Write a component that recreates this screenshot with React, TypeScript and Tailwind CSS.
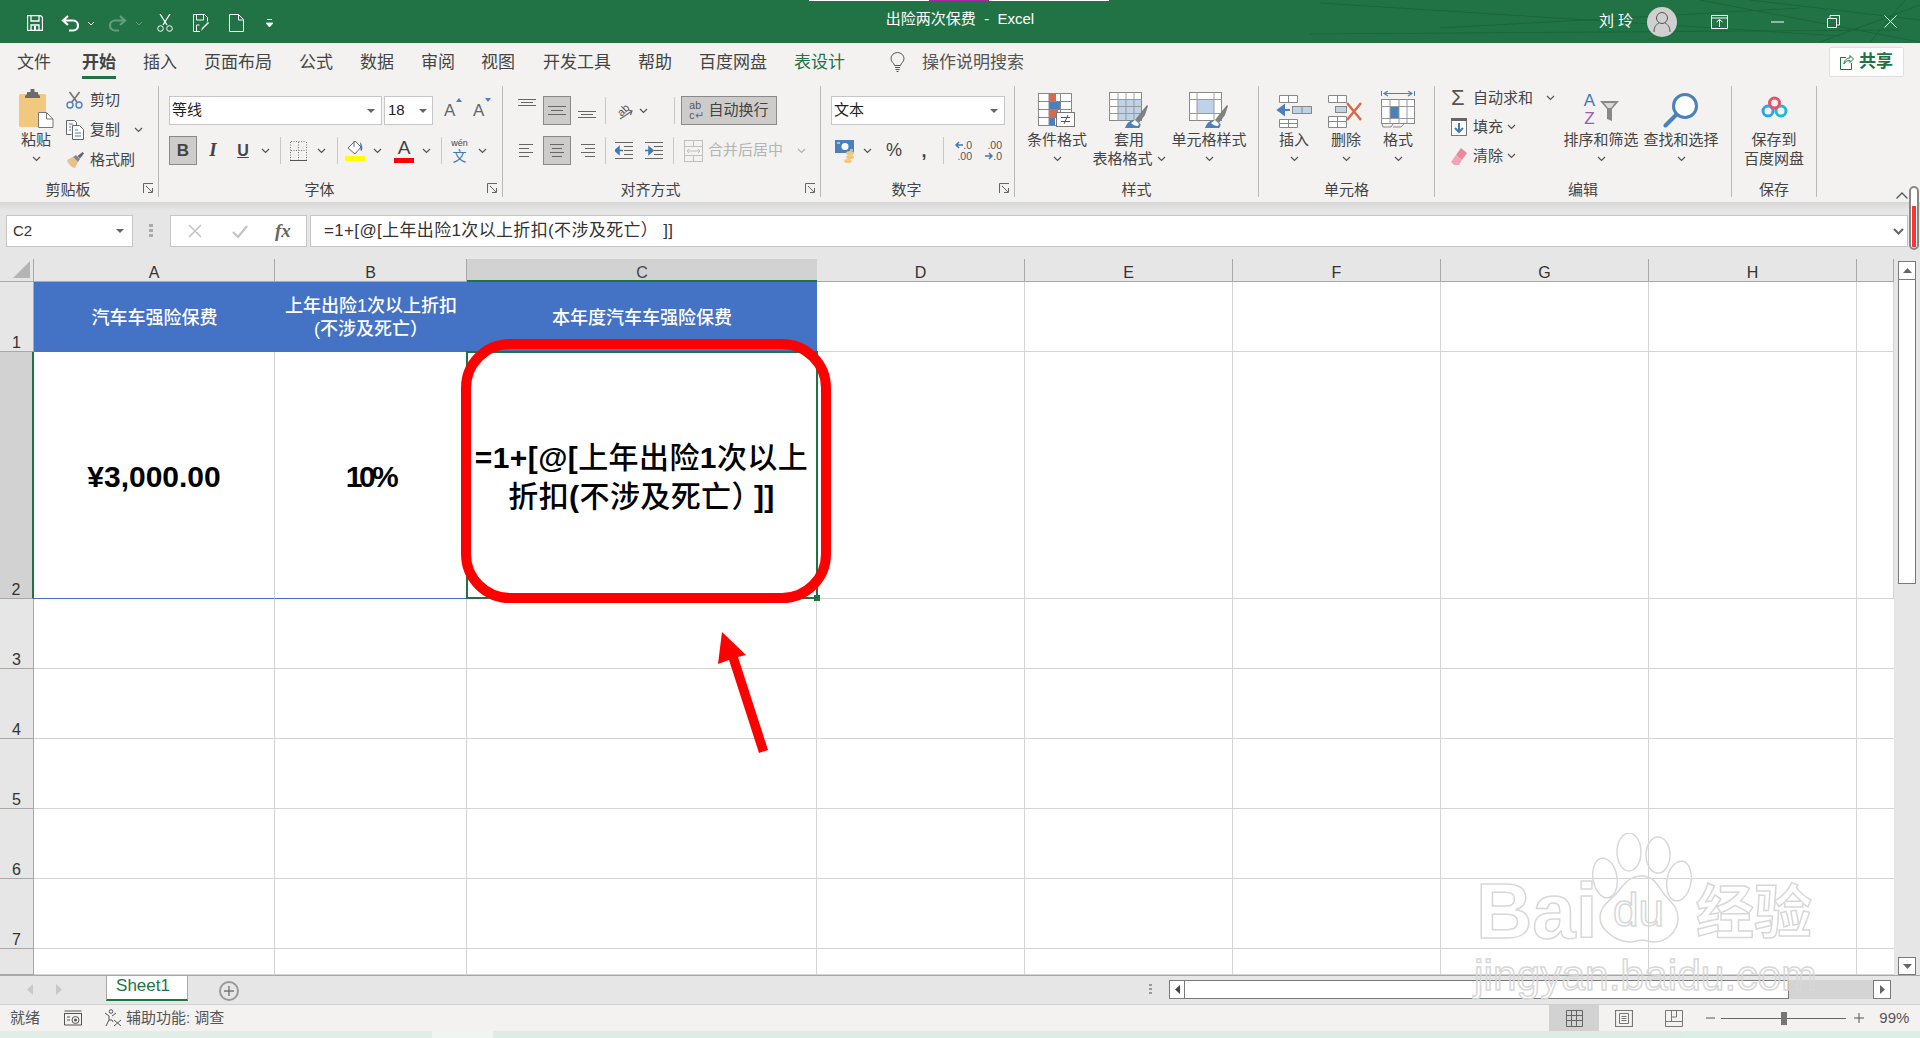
import React from "react";

const Chev = ({ className = "" }: { className?: string }) => (
  <svg width="9" height="6" viewBox="0 0 9 6" className={"shrink-0 " + className}>
    <path d="M1 1l3.5 3.5L8 1" fill="none" stroke="#555" strokeWidth="1.2" />
  </svg>
);

const Tri = ({ className = "" }: { className?: string }) => (
  <svg width="8" height="4" viewBox="0 0 8 4" className={"shrink-0 " + className}>
    <path d="M0 0h8L4 4z" fill="#666" />
  </svg>
);

const Launcher = () => (
  <svg width="11" height="11" viewBox="0 0 11 11">
    <path d="M.5 10V.5H10M3 3l6 6M5 9.5h4.5V5" fill="none" stroke="#666" />
  </svg>
);

const Sep = ({ className = "" }: { className?: string }) => (
  <div className={"h-[27px] w-px shrink-0 bg-[#c8c8c8] " + className} />
);

// lines for the alignment buttons, given as [x1, x2, y]
const Lines = ({ rows, className = "" }: { rows: number[][]; className?: string }) => (
  <svg width="18" height="20" viewBox="0 0 18 20" className={"shrink-0 " + className}>
    {rows.map((r, i) => (
      <path key={i} d={`M${r[0]} ${r[2]}.5H${r[1]}`} stroke="#666" />
    ))}
  </svg>
);

const topLines = [[0, 18, 3], [3, 15, 6], [0, 18, 9]];
const midLines = [[0, 18, 5], [3, 15, 9], [0, 18, 13]];
const botLines = [[0, 18, 10], [3, 15, 13], [0, 18, 16]];
const leftLines = [[1, 15, 3], [1, 11, 7], [1, 15, 11], [1, 11, 15]];
const centerLines = [[2, 16, 3], [4, 14, 7], [2, 16, 11], [4, 14, 15]];
const rightLines = [[3, 17, 3], [7, 17, 7], [3, 17, 11], [7, 17, 15]];

const GrayBtn = ({ children, className = "" }: { children: React.ReactNode; className?: string }) => (
  <div className={"flex h-[29px] shrink-0 items-center justify-center border border-[#8a8a8a] bg-[#cdcccb] " + className}>
    {children}
  </div>
);

function Group({
  title,
  className,
  launcher,
  children,
}: {
  title: string;
  className: string;
  launcher?: boolean;
  children: React.ReactNode;
}) {
  return (
    <div className={"flex h-[111px] shrink-0 flex-col border-r border-[#b9b9b9] " + className}>
      <div className="h-[94px] flex-none">{children}</div>
      <div className="flex h-[17px] items-center">
        <div className="flex-1 pt-[2px] text-center text-[15px] leading-[17px]">{title}</div>
        {launcher && (
          <div className="flex w-[22px] justify-end pr-[4px]">
            <Launcher />
          </div>
        )}
      </div>
    </div>
  );
}

function BigBtn({
  icon,
  lines,
  className = "",
  inlineChev,
}: {
  icon: React.ReactNode;
  lines: string[];
  className?: string;
  inlineChev?: boolean;
}) {
  return (
    <div className={"flex shrink-0 flex-col items-center " + className}>
      <div className="flex h-[44px] items-end pb-[2px]">{icon}</div>
      {lines.map((l, i) => (
        <div key={i} className="flex h-[19px] items-center whitespace-nowrap text-[15px] leading-[19px]">
          {l}
          {inlineChev && i === lines.length - 1 && <Chev className="ml-[4px]" />}
        </div>
      ))}
      {lines.length === 1 && (
        <div className="flex h-[19px] items-center">
          <Chev />
        </div>
      )}
    </div>
  );
}

const PasteIcon = () => (
  <svg width="36" height="39" viewBox="0 0 36 39">
    <rect x="1" y="5" width="27" height="33" rx="1.5" fill="#f0c97e" />
    <path d="M9 5V3h3.5V0h4v3H20v2l2 2v2H7V7z" fill="#6b6b6b" />
    <path d="M20.5 23.5h8l6.5 6.5v8.5H20.500z" fill="#fff" stroke="#777" />
    <path d="M28.500 23.500V30H35" fill="none" stroke="#777" />
  </svg>
);

const SmallCut = () => (
  <svg width="17" height="18" viewBox="0 0 17 18">
    <path d="M6 11L13.500 1M11 11L3.500 1" stroke="#777" strokeWidth="1.7" fill="none" />
    <circle cx="4" cy="14" r="3" fill="none" stroke="#4a81bd" strokeWidth="1.4" />
    <circle cx="13" cy="14" r="3" fill="none" stroke="#4a81bd" strokeWidth="1.4" />
  </svg>
);

const SmallCopy = () => (
  <svg width="18" height="20" viewBox="0 0 18 20">
    <path d="M.5.5h8l2 2v3M.5.5v14h5" fill="#fff" stroke="#666" />
    <path d="M6.500 5.500h7l4 4v10h-11z" fill="#fff" stroke="#666" />
    <path d="M3 4h4M3 7h2M3 10h2M9 10h3M9 13h6M9 16h6" stroke="#4a81bd" />
  </svg>
);

const SmallBrush = () => (
  <svg width="18" height="17" viewBox="0 0 18 17">
    <path d="M1 8l6-3 5 5-3 6c-3 0-7-4-8-8z" fill="#e7c08a" />
    <path d="M7 5l3-2 4 4-2 3z" fill="#888" />
    <path d="M11.500 4l5-4 1.500 1.500-4 5z" fill="#666" />
  </svg>
);

const BorderIcon = () => (
  <svg width="17" height="20" viewBox="0 0 17 20">
    <path d="M.5 1v18M8.500 1v18M16.500 1v18M1 .5h15M1 9.500h15" stroke="#777" strokeDasharray="1 1.500" fill="none" />
    <path d="M0 19.500h17" stroke="#555" />
  </svg>
);

const FillIcon = () => (
  <div className="flex w-[20px] shrink-0 flex-col items-center">
    <svg width="18" height="15" viewBox="0 0 18 15">
      <path d="M9 1l6 6-6 7-7-6z" fill="#fff" stroke="#666" />
      <path d="M8 1v6" stroke="#666" />
      <path d="M14 2c2 2 3 6 2 8s-2 0-1.500-3z" fill="#3f78b5" />
    </svg>
    <div className="mt-px h-[5px] w-[20px] bg-[#ffff00]" />
  </div>
);

const OrientIcon = () => (
  <svg width="20" height="20" viewBox="0 0 20 20">
    <text x="3" y="13" transform="rotate(-45 9 9)" fontSize="11" fill="#555" fontFamily="Liberation Sans">ab</text>
    <path d="M6 18L18 10M14 9l4 1-1.500 4" stroke="#666" fill="none" strokeWidth="1.200" />
  </svg>
);

const IndentIcon = ({ flip }: { flip?: boolean }) => (
  <svg width="18" height="20" viewBox="0 0 18 20" className="shrink-0">
    <path d="M0 1.500h18M9 5.500h9M9 9.500h9M9 13.500h9M0 17.500h18" stroke="#666" />
    <path
      d={flip ? "M0 9.500h6M4 6l4 3.500L4 13z" : "M8 9.500H2M4 6L0 9.500 4 13z"}
      stroke="#3f78b5"
      strokeWidth="1.500"
      fill="#3f78b5"
    />
  </svg>
);

const MergeIcon = () => (
  <svg width="19" height="22" viewBox="0 0 19 22">
    <rect x=".5" y=".5" width="18" height="21" fill="none" stroke="#c0c0c0" />
    <path d="M0 6.500h19M0 15.500h19M9.500 0v6M9.500 16v6" stroke="#c0c0c0" />
    <path d="M3 11h13M5 9l-2 2 2 2M14 9l2 2-2 2" stroke="#c0c0c0" fill="none" />
  </svg>
);

const MoneyIcon = () => (
  <svg width="20" height="24" viewBox="0 0 20 24">
    <rect x="0" y="1" width="19" height="13" fill="#4a81bd" />
    <circle cx="10" cy="7.500" r="3.500" fill="#fff" />
    <path d="M2 4h3M15 11h3" stroke="#fff" />
    <ellipse cx="15" cy="14" rx="4" ry="2" fill="#f0c97e" />
    <ellipse cx="15" cy="18" rx="4" ry="2" fill="#f0c97e" />
    <ellipse cx="13" cy="22" rx="4" ry="2" fill="#f0c97e" />
  </svg>
);

const DecIcon = ({ more }: { more?: boolean }) => (
  <div className="relative flex h-[24px] w-[18px] shrink-0 flex-col items-end justify-center text-[10.500px] leading-[11px] text-[#555]">
    <div className="flex items-center">
      {more && (
        <svg width="8" height="8" viewBox="0 0 8 8">
          <path d="M8 4H2M4 1L1 4l3 3" stroke="#3f78b5" strokeWidth="1.500" fill="none" />
        </svg>
      )}
      {more ? ".0" : ".00"}
    </div>
    <div className="flex items-center">
      {!more && (
        <svg width="8" height="8" viewBox="0 0 8 8">
          <path d="M0 4h6M4 1l3 3-3 3" stroke="#3f78b5" strokeWidth="1.500" fill="none" />
        </svg>
      )}
      {more ? ".00" : ".0"}
    </div>
  </div>
);

const CondIcon = () => (
  <svg width="38" height="35" viewBox="0 0 38 35">
    <rect x=".5" y=".5" width="33" height="32" fill="#fff" stroke="#888" />
    <rect x="11" y="1" width="7" height="7" fill="#d9694a" />
    <rect x="11" y="9" width="11" height="7" fill="#4a81bd" />
    <rect x="11" y="17" width="9" height="7" fill="#d9694a" />
    <rect x="11" y="25" width="6" height="7" fill="#4a81bd" />
    <path d="M11 0v33M22.500 0v33M0 8.500h34M0 16.500h34M0 24.500h34" stroke="#888" fill="none" />
    <rect x="18.500" y="19.500" width="18" height="14" fill="#fff" stroke="#777" />
    <path d="M23 24.500h9M23 28.500h9M30 22l-4 9" stroke="#555" />
  </svg>
);

const Brush = () => (
  <g>
    <path d="M26 28l7-9 5-6 1 1-3 9-6 8z" fill="#808080" />
    <path d="M26 28c-4 0-8 2-10 8h14c2-2 2-5 0-5z" fill="#4a81bd" />
    <path d="M22 31l4-3 4 4-1 2c-3 0-5-1-7-3z" fill="#fff" />
  </g>
);

const TableFmtIcon = () => (
  <svg width="40" height="36" viewBox="0 0 40 36">
    <rect x=".5" y=".5" width="32" height="28" fill="#fff" stroke="#888" />
    <rect x="9" y="7" width="23" height="21" fill="#bed2e8" />
    <path d="M9 0v29M17 0v29M25 0v29M0 7.500h33M0 14.500h33M0 21.500h33" stroke="#999" />
    <Brush />
  </svg>
);

const CellStyleIcon = () => (
  <svg width="40" height="39" viewBox="0 0 40 39">
    <g transform="translate(0 3)">
      <rect x=".5" y=".5" width="32" height="28" fill="#fff" stroke="#888" />
      <rect x="8" y="7" width="17" height="15" fill="#bed2e8" />
      <path d="M8 0v29M25 0v29M0 7.500h33M0 21.500h33" stroke="#999" />
      <Brush />
    </g>
  </svg>
);

const InsertIcon = () => (
  <svg width="36" height="33" viewBox="0 0 36 33">
    <path d="M3.500.5h18v7h-18zM12.500 1v6M3.500 24.500h18v8h-18zM3.500 28.500h18M12.500 25v8" fill="#fff" stroke="#888" />
    <rect x="16.500" y="11.500" width="19" height="7" fill="#bed2e8" stroke="#888" />
    <path d="M26 12v6" stroke="#888" />
    <path d="M14 15H4M8 10.500L2 15l6 4.500z" stroke="#4a81bd" strokeWidth="2" fill="#4a81bd" />
  </svg>
);

const DeleteIcon = () => (
  <svg width="36" height="33" viewBox="0 0 36 33">
    <path d="M.5.500h18v7H.5zM9.500 1v6M.5 21.500h18v11H.5zM.5 26.500h18M9.500 22v10" fill="#fff" stroke="#888" />
    <rect x="7.500" y="11.500" width="11" height="6" fill="#bed2e8" stroke="#888" />
    <path d="M19 8l14 17M33 8L19 25" stroke="#d9694a" strokeWidth="2.500" />
  </svg>
);

const FormatIcon = () => (
  <svg width="34" height="37" viewBox="0 0 34 37">
    <path d="M.5 0v5M33.500 0v5M4 2.500h26" stroke="#4a81bd" />
    <path d="M7 0L3 2.500 7 5M27 0l4 2.500L27 5" fill="none" stroke="#4a81bd" strokeWidth="1.200" />
    <rect x=".5" y="8.500" width="33" height="24" fill="#fff" stroke="#888" />
    <rect x="9" y="16" width="9" height="11" fill="#4a81bd" />
    <path d="M9 8v25M18 8v25M26 8v25M0 15.500h33M0 27.500h33" stroke="#999" />
    <path d="M1 33l1 3h8l2-3M12 36h8l3-3" stroke="#888" fill="none" />
  </svg>
);

const FillDown = () => (
  <svg width="16" height="18" viewBox="0 0 16 18">
    <rect x=".5" y=".5" width="15" height="17" fill="#fff" stroke="#777" />
    <rect x="0" y="0" width="16" height="3" fill="#666" />
    <path d="M8 5v9M4 10l4 4 4-4" stroke="#3f78b5" strokeWidth="2" fill="none" />
  </svg>
);

const Eraser = () => (
  <svg width="17" height="19" viewBox="0 0 17 19">
    <path d="M10 1l6 5-5 7-6-5z" fill="#e88a9a" />
    <path d="M5 8l6 5-3 5H3l-3-3z" fill="#f0a5b2" />
  </svg>
);

const SortIcon = () => (
  <div className="flex h-[36px] w-[38px] items-start">
    <div className="w-[15px] text-center text-[17px] font-medium leading-[18px]">
      <div className="text-[#3f78b5]">A</div>
      <div className="text-[#8f63b5]">Z</div>
    </div>
    <svg width="19" height="22" viewBox="0 0 19 22" className="ml-[3px] mt-[9px]">
      <path d="M0 0h19l-7 8v12l-5-2V8z" fill="#888" />
      <path d="M4 2h11l-4 5H8z" fill="#d8d8d8" />
    </svg>
  </div>
);

const FindIcon = () => (
  <svg width="36" height="35" viewBox="0 0 36 35">
    <circle cx="22" cy="13" r="11.500" fill="#fff" stroke="#4a81bd" strokeWidth="3" />
    <path d="M13 22L2.500 32.500" stroke="#4a81bd" strokeWidth="4" strokeLinecap="round" />
  </svg>
);

const CloudIcon = () => (
  <svg width="27" height="22" viewBox="0 0 27 22" className="mb-[10px]">
    <circle cx="7" cy="15" r="5" fill="none" stroke="#2aa5e8" strokeWidth="3" />
    <circle cx="20" cy="15" r="5" fill="none" stroke="#22b8d8" strokeWidth="3" />
    <circle cx="13.500" cy="7" r="5" fill="none" stroke="#e8506e" strokeWidth="3" />
  </svg>
);

// grid figures
const colWidths = "grid-cols-[34px_241px_192px_350px_208px_208px_208px_208px_208px_37px]";
const cols = ["A", "B", "C", "D", "E", "F", "G", "H", ""];

function Sheet() {
  const cellBorder = "border-r border-b border-[#d4d4d4]";
  const bodyRows = [3, 4, 5, 6, 7, 8];
  return (
    <div className="relative flex-1 bg-white">
      <div
        className={
          "grid h-full grid-rows-[23px_70px_247px_70px_70px_70px_70px_70px_26px] " + colWidths
        }
      >
        <div className="flex items-end justify-end border-r border-b border-[#a8a8a8] bg-[#e6e6e6] p-[3px]">
          <svg width="17" height="17" viewBox="0 0 17 17">
            <path d="M17 0v17H0z" fill="#b4b4b4" />
          </svg>
        </div>
        {cols.map((c) => (
          <div
            key={c || "i"}
            className={
              c === "C"
                ? "border-b-2 border-[#217346] bg-[#d2d2d2] pt-[2px] text-center text-[16px] leading-[23px]"
                : "border-r border-b border-[#a8a8a8] bg-[#e6e6e6] pt-[2px] text-center text-[16px] leading-[23px] text-[#333]"
            }
          >
            {c}
          </div>
        ))}

        <div className="flex items-end justify-center border-r border-b border-[#a8a8a8] bg-[#e6e6e6] text-[16px] leading-[17px] text-[#333]">
          1
        </div>
        <div className="flex items-center justify-center bg-[#4472c4] pt-[2px] text-[18px] font-medium text-white">
          汽车车强险保费
        </div>
        <div className="flex items-center justify-center bg-[#4472c4] pt-[2px] text-center text-[18px] font-medium leading-[23px] text-white">
          <div>
            上年出险1次以上折扣
            <br />
            (不涉及死亡）
          </div>
        </div>
        <div className="flex items-center justify-center bg-[#4472c4] pt-[2px] text-[18px] font-medium text-white">
          本年度汽车车强险保费
        </div>
        {[1, 2, 3, 4, 5, 6].map((n) => (
          <div key={n} className={cellBorder} />
        ))}

        <div className="flex items-end justify-center border-r-2 border-b border-r-[#217346] border-b-[#a8a8a8] bg-[#d2d2d2] text-[16px] leading-[17px] text-[#333]">
          2
        </div>
        <div className="flex items-center justify-center border-r border-b border-r-[#d4d4d4] border-b-[#4472c4] pt-[3px] text-[30px] font-bold text-black">
          ¥3,000.00
        </div>
        <div className="flex items-center justify-center border-r border-b border-r-[#d4d4d4] border-b-[#4472c4] pt-[3px] text-[30px] font-bold tracking-[-3.5px] text-black">
          10%
        </div>
        <div className="flex items-center justify-center border-r border-b border-[#d4d4d4] pt-[4px] text-center text-[30px] font-bold leading-[39px] text-black">
          <div className="whitespace-nowrap tracking-[0.4px]">
            =1+[@[<span className="font-medium">上年出险</span>1<span className="font-medium">次以上</span>
            <br />
            <span className="font-medium">折扣</span>(<span className="mr-[7px] font-medium">不涉及死亡）</span>]]
          </div>
        </div>
        {[1, 2, 3, 4, 5, 6].map((n) => (
          <div key={n} className={cellBorder} />
        ))}

        {bodyRows.map((r) => (
          <React.Fragment key={r}>
            <div className="flex items-end justify-center border-r border-b border-[#a8a8a8] bg-[#e6e6e6] text-[16px] leading-[17px] text-[#333]">
              {r === 8 ? "" : r}
            </div>
            {cols.map((c) => (
              <div key={c || "i"} className={c === "" ? "border-b border-[#d4d4d4]" : cellBorder} />
            ))}
          </React.Fragment>
        ))}
      </div>
      {/* selected cell */}
      <div className="absolute left-[466px] top-[92px] h-[248px] w-[352px] border-2 border-[#217346]">
        <div className="absolute -bottom-[4px] -right-[4px] h-[6px] w-[6px] bg-[#217346]" />
      </div>
    </div>
  );
}

const ScrollBtn = ({ children, className = "" }: { children: React.ReactNode; className?: string }) => (
  <div className={"flex items-center justify-center border border-[#7a7a7a] bg-white " + className}>{children}</div>
);

export default function App() {
  return (
    <div className="relative flex h-[1038px] w-[1920px] flex-col overflow-hidden bg-[#e6e6e6] font-['Liberation_Sans','Noto_Sans_CJK_SC',sans-serif] text-[#444]">
      {/* title bar */}
      <div className="relative grid h-[43px] shrink-0 grid-cols-3 items-center bg-[#217346] text-white">
        <svg className="absolute right-0 top-0" width="640" height="43" viewBox="0 0 640 43">
          <g stroke="#1b6539" fill="none">
            <path d="M40 3L560 36M30 34L620 30M160 28L520 8M420 0L640 42M470 0L640 20M540 42L640 5M590 42L625 0" />
          </g>
        </svg>
        <div className="relative flex items-center pl-[27px] pt-[3px]">
          <svg width="16" height="16" viewBox="0 0 16 16">
            <path d="M.5.5h13l2 2v13H.5zM4 1v5h8V1M4 15v-5h8v5" fill="none" stroke="#fff" strokeWidth="1.300" />
            <rect x="7" y="11" width="2" height="4" fill="#fff" />
          </svg>
          <svg width="18" height="17" viewBox="0 0 18 17" className="ml-[18px]">
            <path d="M7 1L2 5.500 7 10M2 5.500h10a4.500 4.500 0 0 1 0 10h-4" fill="none" stroke="#fff" strokeWidth="2.200" />
          </svg>
          <svg width="8" height="5" viewBox="0 0 8 5" className="ml-[8px]">
            <path d="M1 1l3 3 3-3" stroke="#fff" fill="none" />
          </svg>
          <svg width="18" height="17" viewBox="0 0 18 17" className="ml-[14px] opacity-30">
            <path d="M11 1l5 4.500L11 10M16 5.500H6a4.500 4.500 0 0 0 0 10h4" fill="none" stroke="#fff" strokeWidth="2.200" />
          </svg>
          <svg width="8" height="5" viewBox="0 0 8 5" className="ml-[8px] opacity-30">
            <path d="M1 1l3 3 3-3" stroke="#fff" fill="none" />
          </svg>
          <svg width="16" height="18" viewBox="0 0 16 18" className="ml-[14px]">
            <path d="M6 11L13 0M10 11L3 0" stroke="#fff" strokeWidth="1.300" fill="none" />
            <circle cx="3.500" cy="14.500" r="2.800" fill="none" stroke="#fff" />
            <circle cx="12.500" cy="14.500" r="2.800" fill="none" stroke="#fff" />
          </svg>
          <svg width="16" height="18" viewBox="0 0 16 18" className="ml-[20px]">
            <path d="M7 17.500H.5V.5h11l3 3v4M3.500 1v5h7V1M3.500 17v-6h3" fill="none" stroke="#fff" />
            <path d="M8 17l1-3 6-6 1 1-6 6z" fill="#fff" />
          </svg>
          <svg width="15" height="18" viewBox="0 0 15 18" className="ml-[20px]">
            <path d="M.5.5h9l5 5v12H.5zM9.500 1v5h5" fill="none" stroke="#fff" />
          </svg>
          <svg width="7" height="8" viewBox="0 0 7 8" className="ml-[22px]">
            <path d="M1 .5h5M0 4h7L3.500 8z" stroke="#fff" strokeWidth=".8" fill="#fff" />
          </svg>
        </div>
        <div className="relative pb-[5px] text-center text-[15px]">出险两次保费&nbsp; - &nbsp;Excel</div>
        <div className="relative flex items-center justify-end pr-[23px]">
          <span className="mr-[10px] text-[15px] tracking-[4px]">刘玲</span>
          <div className="flex h-[30px] w-[30px] items-center justify-center rounded-full bg-[#d0d0d0]">
            <svg width="18" height="22" viewBox="0 0 18 22">
              <circle cx="9" cy="7" r="5.500" fill="none" stroke="#555" />
              <path d="M1 21c0-6 3-8 5-9M17 21c0-6-3-8-5-9" fill="none" stroke="#555" />
            </svg>
          </div>
          <svg width="17" height="14" viewBox="0 0 17 14" className="ml-[34px]">
            <path d="M.5.5h16v13H.5zM1 3h15M5.500 7L8.500 4.500 11.500 7M8.500 5v7" fill="none" stroke="#fff" />
          </svg>
          <svg width="13" height="2" viewBox="0 0 13 2" className="ml-[43px]">
            <path d="M0 1h13" stroke="#fff" />
          </svg>
          <svg width="13" height="13" viewBox="0 0 13 13" className="ml-[43px]">
            <path d="M.5 3.500h9v9h-9zM3 3V.5h9.500V10H10" fill="none" stroke="#fff" />
          </svg>
          <svg width="13" height="13" viewBox="0 0 13 13" className="ml-[44px]">
            <path d="M.5.5l12 12M12.500.5l-12 12" stroke="#fff" />
          </svg>
        </div>
      </div>
      <div className="absolute left-[809px] top-0 h-px w-[300px] bg-white">
        <div className="ml-[120px] h-px w-[60px] bg-[#a12ba1]" />
      </div>

      {/* tabs */}
      <div className="flex h-[37px] shrink-0 items-start bg-[#f3f2f1] pl-[17px] text-[17px]">
        <div className="mt-[4px] h-[32px] leading-[31px]">文件</div>
        <div className="ml-[31px] mt-[4px] h-[32px] border-b-[3px] border-[#217346] font-bold leading-[31px]">开始</div>
        <div className="ml-[27px] mt-[4px] h-[32px] leading-[31px]">插入</div>
        <div className="ml-[27px] mt-[4px] h-[32px] leading-[31px]">页面布局</div>
        <div className="ml-[27px] mt-[4px] h-[32px] leading-[31px]">公式</div>
        <div className="ml-[27px] mt-[4px] h-[32px] leading-[31px]">数据</div>
        <div className="ml-[27px] mt-[4px] h-[32px] leading-[31px]">审阅</div>
        <div className="ml-[26px] mt-[4px] h-[32px] leading-[31px]">视图</div>
        <div className="ml-[28px] mt-[4px] h-[32px] leading-[31px]">开发工具</div>
        <div className="ml-[27px] mt-[4px] h-[32px] leading-[31px]">帮助</div>
        <div className="ml-[27px] mt-[4px] h-[32px] leading-[31px]">百度网盘</div>
        <div className="ml-[27px] mt-[4px] h-[32px] leading-[31px] text-[#217346]">表设计</div>
        <svg width="15" height="20" viewBox="0 0 15 20" className="ml-[45px] mt-[9px]">
          <path d="M4.500 13.500C4 11 1 10 1 6.500a6.500 6 0 0 1 13 0c0 3.500-3 4.500-3.500 7z" fill="none" stroke="#555" />
          <path d="M5 15.500h5M5.500 17.500h4M6.500 19.500h2" stroke="#555" />
        </svg>
        <div className="ml-[17px] mt-[4px] leading-[31px] text-[#555]">操作说明搜索</div>
        <div className="ml-auto mr-[16px] mt-[4px] flex h-[30px] w-[75px] items-center justify-center rounded-[2px] border border-[#e1dfdd] bg-white font-bold text-[#217346]">
          <svg width="14" height="16" viewBox="0 0 14 16" className="mr-[5px]">
            <path d="M6 3.500H.5v12h11V9M4 10c0-4 3-6 6-6V1.500L13.500 5 10 8.500V6.500c-3 0-5 1-6 3.500z" fill="none" stroke="#217346" />
          </svg>
          共享
        </div>
      </div>

      {/* ribbon */}
      <div className="flex h-[122px] shrink-0 items-start bg-[#f3f2f1] pt-[6px]">
        <Group title="剪贴板" className="w-[159px]" launcher>
          <div className="flex">
            <BigBtn className="ml-[15px] w-[42px]" icon={<PasteIcon />} lines={["粘贴"]} />
            <div className="ml-[9px] flex flex-col gap-[2px] text-[15px]">
              <div className="flex h-[28px] items-center">
                <div className="flex w-[24px]"><SmallCut /></div>
                剪切
              </div>
              <div className="flex h-[28px] items-center">
                <div className="flex w-[24px]"><SmallCopy /></div>
                复制
                <Chev className="ml-[14px]" />
              </div>
              <div className="flex h-[28px] items-center">
                <div className="flex w-[24px]"><SmallBrush /></div>
                格式刷
              </div>
            </div>
          </div>
        </Group>

        <Group title="字体" className="w-[344px]" launcher>
          <div className="pl-[10px] pt-[10px]">
            <div className="flex h-[29px] items-center">
              <div className="flex h-[29px] w-[213px] items-center justify-between border border-[#c6c6c6] bg-white pl-[2px] pr-[6px] text-[15px] text-[#222]">
                等线
                <Tri />
              </div>
              <div className="ml-[2px] flex h-[29px] w-[49px] items-center justify-between border border-[#c6c6c6] bg-white pl-[3px] pr-[5px] text-[15px] text-[#222]">
                18
                <Tri />
              </div>
              <div className="relative ml-[11px] w-[16px] text-[17px] text-[#666]">
                A
                <svg width="6" height="4" viewBox="0 0 6 4" className="absolute -right-[2px] top-0">
                  <path d="M0 4h6L3 0z" fill="#4a81bd" />
                </svg>
              </div>
              <div className="relative ml-[13px] w-[16px] text-[17px] text-[#666]">
                A
                <svg width="6" height="4" viewBox="0 0 6 4" className="absolute -right-[2px] top-0">
                  <path d="M0 0h6L3 4z" fill="#4a81bd" />
                </svg>
              </div>
            </div>
            <div className="mt-[11px] flex h-[29px] items-center">
              <GrayBtn className="w-[28px] text-[17px] font-bold text-[#444]">B</GrayBtn>
              <div className="ml-[10px] w-[12px] text-center font-['Liberation_Serif',serif] text-[19px] font-bold italic">I</div>
              <div className="ml-[18px] w-[12px] text-center text-[16px] font-bold underline">U</div>
              <Chev className="ml-[12px]" />
              <Sep className="ml-[10px]" />
              <div className="ml-[9px] flex"><BorderIcon /></div>
              <Chev className="ml-[10px]" />
              <Sep className="ml-[11px]" />
              <div className="ml-[7px]"><FillIcon /></div>
              <Chev className="ml-[8px]" />
              <div className="ml-[12px] flex w-[20px] flex-col items-center">
                <div className="h-[17px] text-[19px] font-medium leading-[17px]">A</div>
                <div className="mt-[2px] h-[5px] w-[20px] bg-[#ff0000]" />
              </div>
              <Chev className="ml-[8px]" />
              <Sep className="ml-[10px]" />
              <div className="ml-[9px] w-[17px] text-center leading-none">
                <div className="text-[9px] leading-[11px]">wén</div>
                <div className="text-[14px] leading-[14px] text-[#3f78b5]">文</div>
              </div>
              <Chev className="ml-[10px]" />
            </div>
          </div>
        </Group>

        <Group title="对齐方式" className="w-[318px]" launcher>
          <div className="pl-[15px] pt-[10px]">
            <div className="flex h-[29px] items-center">
              <Lines rows={topLines} className="self-start" />
              <GrayBtn className="ml-[7px] w-[28px]"><Lines rows={midLines} /></GrayBtn>
              <Lines rows={botLines} className="ml-[7px]" />
              <Sep className="ml-[9px]" />
              <div className="ml-[8px] flex"><OrientIcon /></div>
              <Chev className="ml-[5px]" />
              <Sep className="ml-[26px]" />
              <GrayBtn className="ml-[6px] w-[96px]">
                <div className="mr-[5px] text-[10.500px] leading-[9.500px] text-[#555]">
                  ab
                  <br />
                  c<span className="text-[#3f78b5]">↵</span>
                </div>
                <span className="text-[15px]">自动换行</span>
              </GrayBtn>
            </div>
            <div className="mt-[11px] flex h-[29px] items-center">
              <Lines rows={leftLines} />
              <GrayBtn className="ml-[7px] w-[28px]"><Lines rows={centerLines} /></GrayBtn>
              <Lines rows={rightLines} className="ml-[7px]" />
              <Sep className="ml-[9px]" />
              <div className="ml-[9px] flex"><IndentIcon /></div>
              <div className="ml-[12px] flex"><IndentIcon flip /></div>
              <Sep className="ml-[10px]" />
              <div className="ml-[10px] flex"><MergeIcon /></div>
              <span className="ml-[5px] text-[15px] text-[#b4b4b4]">合并后居中</span>
              <Chev className="ml-[14px] opacity-40" />
            </div>
          </div>
        </Group>

        <Group title="数字" className="w-[194px]" launcher>
          <div className="pl-[10px] pt-[10px]">
            <div className="flex h-[29px] w-[174px] items-center justify-between border border-[#c6c6c6] bg-white pl-[2px] pr-[6px] text-[15px] text-[#222]">
              文本
              <Tri />
            </div>
            <div className="mt-[11px] flex h-[29px] items-center">
              <div className="ml-[4px] flex"><MoneyIcon /></div>
              <Chev className="ml-[8px]" />
              <div className="ml-[14px] w-[15px] text-center text-[18px]">%</div>
              <div className="ml-[19px] w-[8px] text-center font-bold text-[18px] leading-[14px]">,</div>
              <Sep className="ml-[15px]" />
              <div className="ml-[10px]"><DecIcon more /></div>
              <div className="ml-[12px]"><DecIcon /></div>
            </div>
          </div>
        </Group>

        <Group title="样式" className="w-[244px]">
          <div className="flex pl-[5px]">
            <BigBtn className="w-[74px]" icon={<CondIcon />} lines={["条件格式"]} />
            <BigBtn className="w-[70px]" icon={<TableFmtIcon />} lines={["套用", "表格格式"]} inlineChev />
            <BigBtn className="w-[90px]" icon={<CellStyleIcon />} lines={["单元格样式"]} />
          </div>
        </Group>

        <Group title="单元格" className="w-[176px]">
          <div className="flex pl-[9px]">
            <BigBtn className="w-[52px]" icon={<InsertIcon />} lines={["插入"]} />
            <BigBtn className="w-[52px]" icon={<DeleteIcon />} lines={["删除"]} />
            <BigBtn className="w-[52px]" icon={<FormatIcon />} lines={["格式"]} />
          </div>
        </Group>

        <Group title="编辑" className="w-[297px]">
          <div className="flex pl-[16px]">
            <div className="flex w-[110px] flex-col gap-[5px] text-[15px]">
              <div className="flex h-[24px] items-center">
                <div className="w-[22px] text-[22px] leading-[24px] text-[#555]">Σ</div>
                自动求和
                <Chev className="ml-[13px]" />
              </div>
              <div className="flex h-[24px] items-center">
                <div className="flex w-[22px]"><FillDown /></div>
                填充
                <Chev className="ml-[4px]" />
              </div>
              <div className="flex h-[24px] items-center">
                <div className="flex w-[22px]"><Eraser /></div>
                清除
                <Chev className="ml-[4px]" />
              </div>
            </div>
            <BigBtn className="w-[80px]" icon={<SortIcon />} lines={["排序和筛选"]} />
            <BigBtn className="w-[80px]" icon={<FindIcon />} lines={["查找和选择"]} />
          </div>
        </Group>

        <Group title="保存" className="w-[85px]">
          <BigBtn icon={<CloudIcon />} lines={["保存到", "百度网盘"]} />
        </Group>

        <div className="flex h-[116px] flex-1 items-end justify-end pr-[12px]">
          <svg width="12" height="7" viewBox="0 0 12 7" className="mb-[3px]">
            <path d="M.5 6.500L6 1l5.500 5.500" fill="none" stroke="#555" strokeWidth="1.300" />
          </svg>
        </div>
      </div>

      {/* formula bar */}
      <div className="flex h-[57px] shrink-0 items-start bg-[linear-gradient(#d6d6d6,#e6e6e6_8px)] pl-[6px] pr-[12px] pt-[13px]">
        <div className="flex h-[32px] w-[127px] items-center justify-between border border-[#c6c6c6] bg-white pl-[6px] pr-[8px] text-[15px] text-[#333]">
          C2
          <Tri />
        </div>
        <div className="ml-[16px] mt-[9px] flex flex-col gap-[2px]">
          <div className="h-[3px] w-[4px] bg-[#aaa]" />
          <div className="h-[3px] w-[4px] bg-[#aaa]" />
          <div className="h-[3px] w-[4px] bg-[#aaa]" />
        </div>
        <div className="ml-[17px] flex h-[32px] w-[137px] items-center border border-[#c6c6c6] bg-white pl-[17px]">
          <svg width="14" height="14" viewBox="0 0 14 14">
            <path d="M1 1l12 12M13 1L1 13" stroke="#c4c4c4" strokeWidth="1.600" />
          </svg>
          <svg width="16" height="13" viewBox="0 0 16 13" className="ml-[30px]">
            <path d="M1 7l5 5L15 1" fill="none" stroke="#c4c4c4" strokeWidth="2.200" />
          </svg>
          <span className="ml-[27px] font-['Liberation_Serif',serif] text-[19px] font-bold italic text-[#666]">fx</span>
        </div>
        <div className="ml-[3px] flex h-[32px] flex-1 items-center justify-between border border-[#c6c6c6] bg-white pl-[13px] pr-[3px] text-[17px] text-[#333]">
          <span className="tracking-[0.35px]">=1+[@[上年出险1次以上折扣(不涉及死亡）&nbsp;]]</span>
          <svg width="11" height="7" viewBox="0 0 11 7">
            <path d="M1 1l4.500 4.500L10 1" fill="none" stroke="#666" strokeWidth="2" />
          </svg>
        </div>
      </div>

      {/* sheet */}
      <div className="flex h-[716px] shrink-0">
        <Sheet />
        <div className="flex w-[26px] flex-col items-center bg-[#e6e6e6] pt-[2px]">
          <ScrollBtn className="h-[19px] w-[18px]">
            <svg width="9" height="5" viewBox="0 0 9 5"><path d="M0 5h9L4.500 0z" fill="#666" /></svg>
          </ScrollBtn>
          <div className="h-[304px] w-[18px] border border-t-0 border-[#7a7a7a] bg-white" />
          <div className="flex-1" />
          <ScrollBtn className="h-[18px] w-[18px]">
            <svg width="9" height="5" viewBox="0 0 9 5"><path d="M0 0h9L4.500 5z" fill="#666" /></svg>
          </ScrollBtn>
        </div>
      </div>

      {/* sheet tabs */}
      <div className="flex h-[29px] shrink-0 items-start border-t border-[#a8a8a8] bg-[#e6e6e6]">
        <svg width="7" height="11" viewBox="0 0 7 11" className="ml-[27px] mt-[8px]">
          <path d="M6 0v11L0 5.500z" fill="#c8c8c8" />
        </svg>
        <svg width="7" height="11" viewBox="0 0 7 11" className="ml-[21px] mt-[8px]">
          <path d="M1 0v11l6-5.500z" fill="#c8c8c8" />
        </svg>
        <div className="ml-[44px] flex h-[25px] w-[82px] items-center justify-center border-x border-b-2 border-x-[#a8a8a8] border-b-[#217346] bg-white pb-[4px] pr-[8px] text-[17px] text-[#217346]">
          Sheet1
        </div>
        <div className="ml-[31px] mt-[5px] flex h-[20px] w-[20px] items-center justify-center rounded-full border-2 border-[#999]">
          <svg width="10" height="10" viewBox="0 0 10 10">
            <path d="M5 0v10M0 5h10" stroke="#777" strokeWidth="1.400" />
          </svg>
        </div>
        <div className="ml-[910px] mt-[8px] flex flex-col gap-[2px]">
          <div className="h-[2px] w-[3px] bg-[#999]" />
          <div className="h-[2px] w-[3px] bg-[#999]" />
          <div className="h-[2px] w-[3px] bg-[#999]" />
        </div>
        <div className="ml-[17px] mt-[4px] flex h-[19px] w-[722px] bg-[#d4d4d4]">
          <ScrollBtn className="h-[19px] w-[16px]">
            <svg width="5" height="9" viewBox="0 0 5 9"><path d="M5 0v9L0 4.500z" fill="#444" /></svg>
          </ScrollBtn>
          <div className="h-[19px] w-[604px] border border-l-0 border-[#7a7a7a] bg-white" />
          <div className="flex-1" />
          <ScrollBtn className="h-[19px] w-[18px]">
            <svg width="5" height="9" viewBox="0 0 5 9"><path d="M0 0v9l5-4.500z" fill="#666" /></svg>
          </ScrollBtn>
        </div>
      </div>

      {/* status bar */}
      <div className="flex h-[27px] shrink-0 items-center border-t border-[#d0d0d0] bg-[#f3f2f1] pl-[10px] text-[15px] text-[#555]">
        就绪
        <svg width="18" height="16" viewBox="0 0 18 16" className="ml-[24px]">
          <path d="M.5 1h17M.5 3.500h17M.5 3v12h17V3M3 7h3M3 10h3" stroke="#555" fill="none" />
          <circle cx="11.500" cy="10" r="3.500" fill="none" stroke="#555" />
          <circle cx="11.500" cy="10" r="1.500" fill="#555" />
        </svg>
        <svg width="18" height="18" viewBox="0 0 18 18" className="ml-[22px]">
          <circle cx="7" cy="2.500" r="1.800" fill="none" stroke="#555" />
          <path d="M1 4l4 3v4l-3 6M12 4L8 7M5 11h3l1 2" fill="none" stroke="#555" />
          <path d="M10 11l7 6M17 11l-7 6" stroke="#555" />
        </svg>
        <span className="ml-[4px]">辅助功能: 调查</span>
        <div className="ml-[1325px] flex h-[26px] w-[50px] items-center justify-center bg-[#d2d2d2]">
          <svg width="17" height="17" viewBox="0 0 17 17">
            <path d="M.5.5h16v16H.5zM.5 5.500h16M.5 10.500h16M5.500 1v16M10.500 1v16" fill="none" stroke="#666" />
          </svg>
        </div>
        <svg width="18" height="17" viewBox="0 0 18 17" className="ml-[16px]">
          <path d="M.5.5h17v16H.5z" fill="none" stroke="#777" strokeWidth="1.200" />
          <path d="M4.500 3.500h9v10h-9zM6.500 6.500h5M6.500 8.500h5M6.500 10.500h5" fill="none" stroke="#777" />
        </svg>
        <svg width="18" height="17" viewBox="0 0 18 17" className="ml-[32px]">
          <path d="M.5 16.500V.5h17v16zM.5 11.500h17M6.500 1v10M11.500 1v6H6.500" fill="none" stroke="#777" />
        </svg>
        <svg width="9" height="2" viewBox="0 0 9 2" className="ml-[23px]">
          <path d="M0 1h9" stroke="#555" />
        </svg>
        <div className="ml-[6px] flex h-[13px] w-[125px] items-center">
          <div className="h-px w-[60px] bg-[#666]" />
          <div className="h-[13px] w-[6px] bg-[#777]" />
          <div className="h-px flex-1 bg-[#666]" />
        </div>
        <svg width="10" height="10" viewBox="0 0 10 10" className="ml-[8px]">
          <path d="M5 0v10M0 5h10" stroke="#555" />
        </svg>
        <span className="ml-[15px] text-[#555]">99%</span>
      </div>

      {/* bottom strip behind the window */}
      <div className="flex flex-1">
        <div className="w-[432px] bg-[#e3ede7]" />
        <div className="w-[61px] bg-[#eff5f1]" />
        <div className="w-[1190px] bg-[#dfece6]" />
        <div className="flex-1 bg-[#dcefe6]" />
      </div>

      {/* ribbon scroll gauge */}
      <div className="absolute left-[1909px] top-[186px] flex h-[64px] w-[10px] flex-col justify-end rounded-full border-[2.500px] border-[#888] bg-white p-px">
        <div className="h-[41px] w-full bg-[#f33]" />
      </div>

      {/* annotation */}
      <svg className="pointer-events-none absolute left-0 top-0" width="1920" height="1038" viewBox="0 0 1920 1038">
        <rect x="466" y="344" width="360" height="254" rx="44" fill="none" stroke="#ff0000" strokeWidth="10" />
        <path d="M722 632L746 655 738 657 768 750 759 753 729 660 718 664z" fill="#ff0000" />
      </svg>

      {/* watermark */}
      <div className="pointer-events-none absolute left-[1474px] top-[833px] h-[165px] w-[345px] text-transparent">
        <svg className="absolute left-[118px] top-0" width="100" height="110" viewBox="0 0 100 110" fill="none" stroke="#d8d8d8" strokeWidth="1.500">
          <ellipse cx="37" cy="19" rx="12" ry="19" />
          <ellipse cx="66" cy="22" rx="12" ry="18" />
          <ellipse cx="13" cy="45" rx="12" ry="20" transform="rotate(-10 13 45)" />
          <ellipse cx="87" cy="48" rx="12" ry="20" transform="rotate(10 87 48)" />
          <path d="M50 43c12 0 16 10 22 18 8 9 14 14 14 24 0 14-12 24-24 24-5 0-8-2-12-2s-7 2-12 2C26 109 8 98 8 85c0-11 8-16 16-24 7-8 12-18 26-18z" />
        </svg>
        <div className="absolute left-[2px] top-[38px] font-bold leading-[80px] text-[78px] [-webkit-text-stroke:1.500px_#d8d8d8]">Bai</div>
        <div className="absolute left-[139px] top-[52px] leading-[50px] text-[46px] [-webkit-text-stroke:1.500px_#d8d8d8]">du</div>
        <div className="absolute left-[222px] top-[48px] font-bold leading-[64px] text-[58px] [-webkit-text-stroke:1.500px_#d8d8d8]">经验</div>
        <div className="absolute left-0 top-[118px] leading-[50px] text-[42.500px] [-webkit-text-stroke:1.500px_#d8d8d8]">jingyan.baidu.com</div>
      </div>
    </div>
  );
}
